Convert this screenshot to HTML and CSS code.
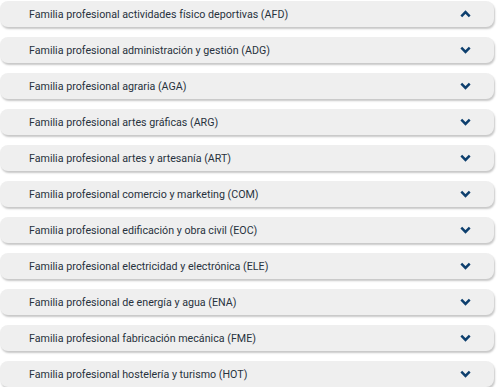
FILE: index.html
```html
<!DOCTYPE html>
<html lang="es">
<head>
    <meta charset="UTF-8">
    <title>Familias profesionales</title>
    <link rel="stylesheet" href="styles.css">
</head>
<body>
    <div class="accordion">
        <div class="item open">
            <span class="title">Familia profesional actividades físico deportivas (AFD)</span>
            <svg class="chevron" viewBox="0 0 11 8"><path d="M1.3 6.3 L5.5 2.1 L9.7 6.3"/></svg>
        </div>
        <div class="item">
            <span class="title">Familia profesional administración y gestión (ADG)</span>
            <svg class="chevron" viewBox="0 0 11 8"><path d="M1.3 1.7 L5.5 5.9 L9.7 1.7"/></svg>
        </div>
        <div class="item">
            <span class="title">Familia profesional agraria (AGA)</span>
            <svg class="chevron" viewBox="0 0 11 8"><path d="M1.3 1.7 L5.5 5.9 L9.7 1.7"/></svg>
        </div>
        <div class="item">
            <span class="title">Familia profesional artes gráficas (ARG)</span>
            <svg class="chevron" viewBox="0 0 11 8"><path d="M1.3 1.7 L5.5 5.9 L9.7 1.7"/></svg>
        </div>
        <div class="item">
            <span class="title">Familia profesional artes y artesanía (ART)</span>
            <svg class="chevron" viewBox="0 0 11 8"><path d="M1.3 1.7 L5.5 5.9 L9.7 1.7"/></svg>
        </div>
        <div class="item">
            <span class="title">Familia profesional comercio y marketing (COM)</span>
            <svg class="chevron" viewBox="0 0 11 8"><path d="M1.3 1.7 L5.5 5.9 L9.7 1.7"/></svg>
        </div>
        <div class="item">
            <span class="title">Familia profesional edificación y obra civil (EOC)</span>
            <svg class="chevron" viewBox="0 0 11 8"><path d="M1.3 1.7 L5.5 5.9 L9.7 1.7"/></svg>
        </div>
        <div class="item">
            <span class="title">Familia profesional electricidad y electrónica (ELE)</span>
            <svg class="chevron" viewBox="0 0 11 8"><path d="M1.3 1.7 L5.5 5.9 L9.7 1.7"/></svg>
        </div>
        <div class="item">
            <span class="title">Familia profesional de energía y agua (ENA)</span>
            <svg class="chevron" viewBox="0 0 11 8"><path d="M1.3 1.7 L5.5 5.9 L9.7 1.7"/></svg>
        </div>
        <div class="item">
            <span class="title">Familia profesional fabricación mecánica (FME)</span>
            <svg class="chevron" viewBox="0 0 11 8"><path d="M1.3 1.7 L5.5 5.9 L9.7 1.7"/></svg>
        </div>
        <div class="item">
            <span class="title">Familia profesional hostelería y turismo (HOT)</span>
            <svg class="chevron" viewBox="0 0 11 8"><path d="M1.3 1.7 L5.5 5.9 L9.7 1.7"/></svg>
        </div>
    </div>
</body>
</html>
```

FILE: styles.css
```css
body {
    margin: 0;
    background: #fff;
    font-family: Roboto, 'Liberation Sans', sans-serif;
}

.accordion {
    display: flex;
    flex-direction: column;
    gap: 10px;
    padding: 1px 6px 0 0;
}

.item {
    display: flex;
    align-items: center;
    justify-content: space-between;
    height: 26px;
    padding: 0 23px 0 29px;
    background: #efefef;
    border-radius: 8px;
    box-shadow: 1px 2px 2px rgba(0, 0, 0, 0.22);
}

.title {
    font-size: 10.7px;
    color: #28323d;
}

.chevron {
    width: 11px;
    height: 8px;
    fill: none;
    stroke: #0d3f6e;
    stroke-width: 2.5;
}
```
